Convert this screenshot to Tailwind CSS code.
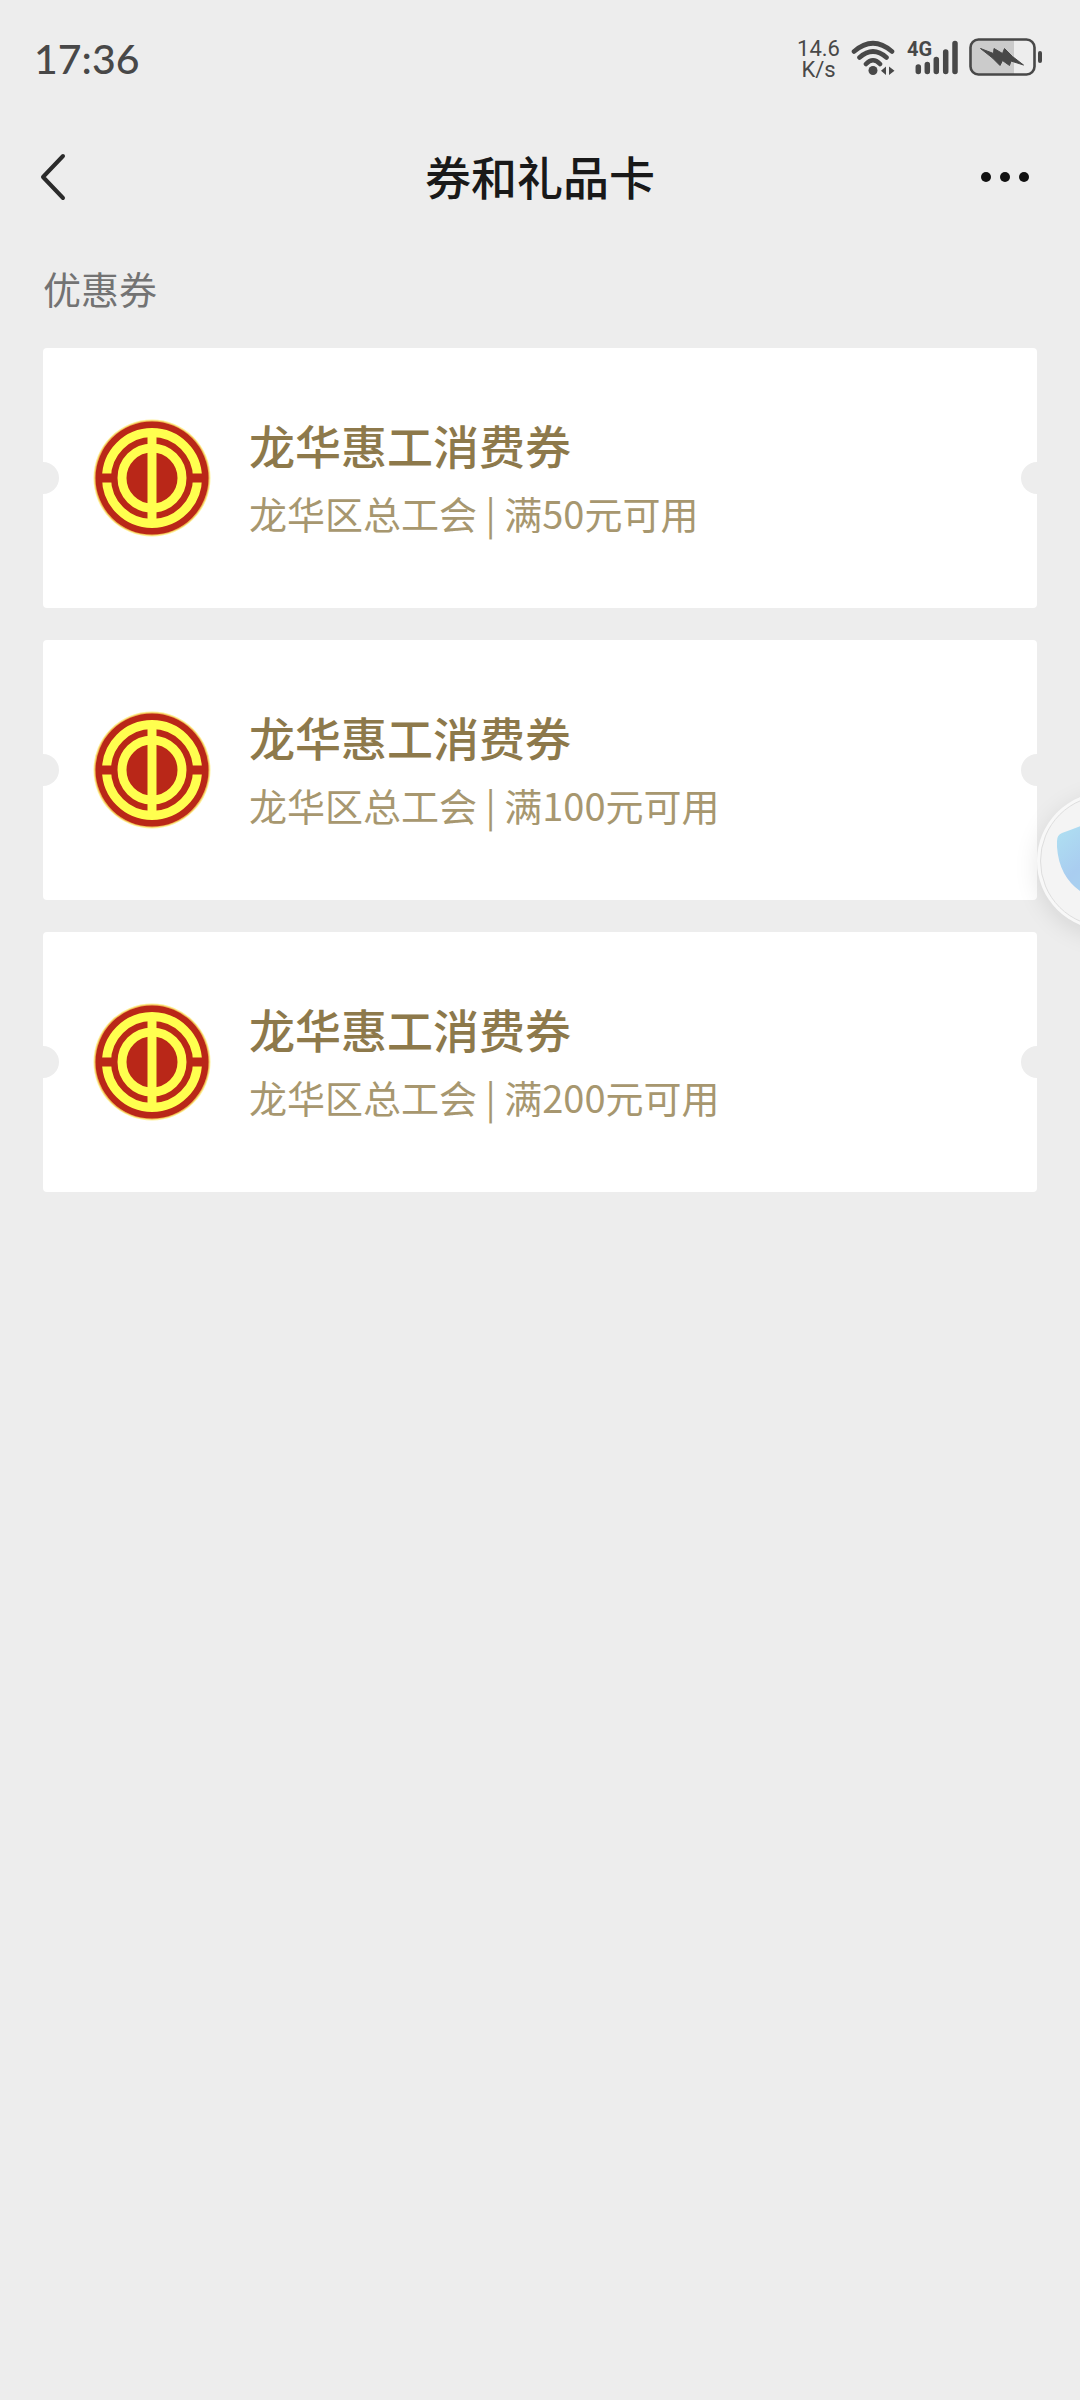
<!DOCTYPE html>
<html lang="zh-CN">
<head>
<meta charset="utf-8">
<meta name="viewport" content="width=device-width, initial-scale=1">
<title>券和礼品卡</title>
<script src="https://cdn.jsdelivr.net/npm/@tailwindcss/browser@4"></script>
</head>
<body class="bg-[#ededed] font-['Noto_Sans_CJK_SC',sans-serif]">
<!-- Shared union emblem -->
<svg class="hidden" aria-hidden="true">
  <symbol id="emblem" viewBox="-59 -59 118 118">
    <circle r="58.5" fill="#fdf09a"/>
    <circle r="57.5" fill="#f0b850"/>
    <circle r="56.5" fill="#b92718"/>
    <circle r="45.5" fill="none" stroke="#ffff4f" stroke-width="9"/>
    <path d="M-52-4.5H-40V4.5H-52ZM40-4.5H52V4.5H40Z" fill="#b92718"/>
    <circle r="30" fill="none" stroke="#ffff4f" stroke-width="9"/>
    <path d="M-4.5-48H4.5V48H-4.5Z" fill="#ffff4f"/>
  </symbol>
</svg>
<div class="relative min-h-screen overflow-hidden">
  <div class="flex h-[114px] items-center justify-between pr-[38px] pl-[34px] text-[#484848]">
    <time class="pt-1 font-[Lato,sans-serif] text-[41px] leading-[48px] font-medium">17:36</time>
    <div class="flex items-center gap-[11px]">
      <div class="pt-1 text-center font-[Roboto,sans-serif] text-[22px] leading-[21px]"><div>14.6</div><div>K/s</div></div>
      <svg class="h-9 w-11" viewBox="0 0 44 36" fill="none" stroke="#484848" stroke-width="4.600" stroke-linecap="round" aria-label="Wi-Fi">
        <path d="M3 12.500Q22-4 41 12.500M8.500 18.500Q22 6.500 35.500 18.500M15 25Q22 17.500 29 25"/>
        <circle cx="22" cy="31.500" r="4.500" fill="#484848" stroke="none"/>
        <path d="M35 27.500V36L30 31.700ZM38 27.500V36L43.500 31.700Z" fill="#484848" stroke="none"/>
      </svg>
      <svg class="h-9 w-[52px]" viewBox="-2 0 52 36" aria-label="4G">
        <text x="-1" y="17" font-family="Roboto, sans-serif" font-size="20" font-weight="700" fill="#484848">4G</text>
        <path d="M10.300 28V32.500M19.300 25.500V32.500M28.300 20.500V32.500M37.700 13V32.500M47 4.500V32.500" stroke="#484848" stroke-width="5.500" stroke-linecap="round"/>
      </svg>
      <svg class="h-[38px] w-[73px]" viewBox="0 0 73 38" aria-label="充电中">
        <path d="M11 2H45V36H11Q2 36 2 27V11Q2 2 11 2Z" fill="#cbcbcb"/>
        <rect x="1.500" y="1.500" width="64" height="35" rx="8" fill="none" stroke="#484848" stroke-width="2.600"/>
        <rect x="69" y="13" width="4" height="12" rx="2" fill="#484848"/>
        <path d="M11.500 10.500L24.500 15.500L25 10.500L33.500 15.500L35.500 10.500L43.500 18.500L54.500 27L42 23L40.500 27.500L33.500 22.500L31 27.500L23.500 20Z" fill="#484848" stroke="#484848" stroke-linejoin="round"/>
      </svg>
    </div>
  </div>

  <header class="flex h-[126px] items-center justify-between px-9">
    <button type="button" class="flex h-16 w-16 items-center" aria-label="返回">
      <svg class="h-12 w-9" viewBox="0 0 36 48" fill="none" stroke="#2b2b2b" stroke-width="4" stroke-linecap="round" stroke-linejoin="round"><path d="M27 3L7 24L27 45"/></svg>
    </button>
    <h1 class="pb-1 text-[46px] leading-[64px] font-medium text-[#191919]">券和礼品卡</h1>
    <button type="button" class="flex h-16 w-16 items-center justify-end" aria-label="更多">
      <svg class="h-4 w-16" viewBox="0 0 64 16" fill="#111"><circle cx="6" cy="8" r="5"/><circle cx="25" cy="8" r="5"/><circle cx="44" cy="8" r="5"/></svg>
    </button>
  </header>

  <main class="px-[43px]">
    <h2 class="pb-3 text-[38px] leading-[96px] text-[#737373]">优惠券</h2>
    <ul class="flex flex-col gap-8">
      <li class="relative overflow-hidden rounded-[4px] bg-white">
        <a href="#" class="flex h-[260px] items-center gap-[38px] pl-[50px]">
          <svg class="size-[118px] shrink-0" aria-hidden="true"><use href="#emblem"/></svg>
          <div class="pb-[3px]">
            <h3 class="text-[46px] leading-[72px] font-medium text-[#8d794b]">龙华惠工消费券</h3>
            <p class="text-[38px] leading-[66px] text-[#a7976f]">龙华区总工会 | 满50元可用</p>
          </div>
        </a>
        <span class="absolute top-1/2 left-0 size-8 -translate-1/2 rounded-full bg-[#ededed]"></span>
        <span class="absolute top-1/2 right-0 size-8 translate-x-1/2 -translate-y-1/2 rounded-full bg-[#ededed]"></span>
      </li>
      <li class="relative overflow-hidden rounded-[4px] bg-white">
        <a href="#" class="flex h-[260px] items-center gap-[38px] pl-[50px]">
          <svg class="size-[118px] shrink-0" aria-hidden="true"><use href="#emblem"/></svg>
          <div class="pb-[3px]">
            <h3 class="text-[46px] leading-[72px] font-medium text-[#8d794b]">龙华惠工消费券</h3>
            <p class="text-[38px] leading-[66px] text-[#a7976f]">龙华区总工会 | 满100元可用</p>
          </div>
        </a>
        <span class="absolute top-1/2 left-0 size-8 -translate-1/2 rounded-full bg-[#ededed]"></span>
        <span class="absolute top-1/2 right-0 size-8 translate-x-1/2 -translate-y-1/2 rounded-full bg-[#ededed]"></span>
      </li>
      <li class="relative overflow-hidden rounded-[4px] bg-white">
        <a href="#" class="flex h-[260px] items-center gap-[38px] pl-[50px]">
          <svg class="size-[118px] shrink-0" aria-hidden="true"><use href="#emblem"/></svg>
          <div class="pb-[3px]">
            <h3 class="text-[46px] leading-[72px] font-medium text-[#8d794b]">龙华惠工消费券</h3>
            <p class="text-[38px] leading-[66px] text-[#a7976f]">龙华区总工会 | 满200元可用</p>
          </div>
        </a>
        <span class="absolute top-1/2 left-0 size-8 -translate-1/2 rounded-full bg-[#ededed]"></span>
        <span class="absolute top-1/2 right-0 size-8 translate-x-1/2 -translate-y-1/2 rounded-full bg-[#ededed]"></span>
      </li>
    </ul>
  </main>

  <!-- Floating security shortcut, half tucked behind the screen edge -->
  <button type="button" class="absolute top-[792px] -right-[95px] size-[138px] rounded-full bg-[#f8f8f8] shadow-[0_6px_24px_rgba(0,0,0,0.1)]" aria-label="安全助手">
    <svg class="size-[138px]" viewBox="0 0 138 138">
      <defs><linearGradient id="shield" x1="0" y1="0" x2="1" y2="1"><stop offset="0" stop-color="#b0e4f2"/><stop offset=".4" stop-color="#a9cdf0"/><stop offset="1" stop-color="#a9dff0"/></linearGradient></defs>
      <circle cx="69" cy="69" r="65.500" fill="#f4f4f4" stroke="#dedede"/>
      <path d="M69 23Q48 33 25 41Q20 43 20 49V55Q22 84 43 99Q54 108 69 114Q84 108 95 99Q116 84 118 55V49Q118 43 113 41Q90 33 69 23Z" fill="url(#shield)"/>
    </svg>
  </button>
</div>
</body>
</html>
